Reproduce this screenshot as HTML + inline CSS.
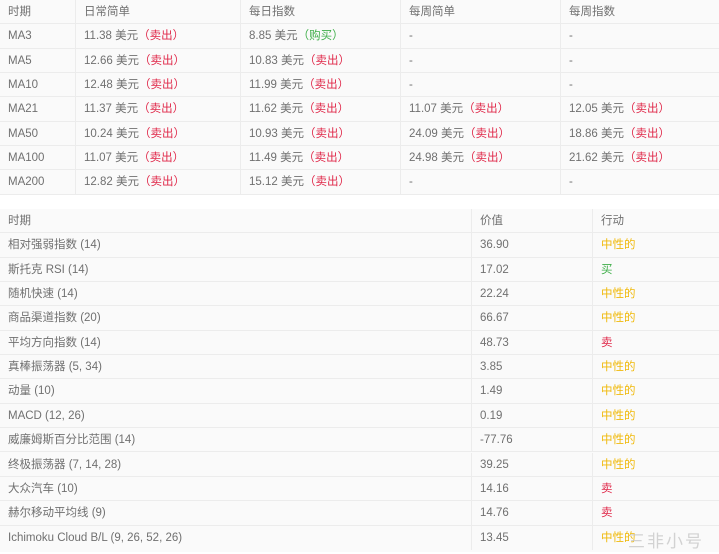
<!DOCTYPE html>
<html><head><meta charset="utf-8"><style>
*{margin:0;padding:0;box-sizing:border-box}
body{width:719px;height:554px;background:#fff;font-family:"Liberation Sans","Noto Sans CJK SC",sans-serif;font-size:11.5px;color:#707070;position:relative;overflow:hidden}
.t{position:absolute;left:0;width:719px;background:#fafafa}
.r{position:absolute;left:0;width:719px;height:24.35px;border-bottom:1px solid #ececec}
.c{position:absolute;top:0;height:100%;line-height:25px;padding-left:8px;border-left:1px solid #ececec;white-space:nowrap}
.c:first-child{border-left:none}
.s{color:#e0294a}.b{color:#3fae49}.n{color:#f0b90b}
</style></head><body>
<div class="t" style="top:0;height:194px">
<div class="r" style="top:0"><div class="c" style="left:0;width:75px">时期</div><div class="c" style="left:75px;width:165px">日常简单</div><div class="c" style="left:240px;width:160px">每日指数</div><div class="c" style="left:400px;width:160px">每周简单</div><div class="c" style="left:560px;width:159px">每周指数</div></div>
<div class="r" style="top:24.35px"><div class="c" style="left:0;width:75px">MA3</div><div class="c" style="left:75px;width:165px">11.38 美元<span class="s">（卖出）</span></div><div class="c" style="left:240px;width:160px">8.85 美元<span class="b">（购买）</span></div><div class="c" style="left:400px;width:160px">-</div><div class="c" style="left:560px;width:159px">-</div></div>
<div class="r" style="top:48.7px"><div class="c" style="left:0;width:75px">MA5</div><div class="c" style="left:75px;width:165px">12.66 美元<span class="s">（卖出）</span></div><div class="c" style="left:240px;width:160px">10.83 美元<span class="s">（卖出）</span></div><div class="c" style="left:400px;width:160px">-</div><div class="c" style="left:560px;width:159px">-</div></div>
<div class="r" style="top:73.05px"><div class="c" style="left:0;width:75px">MA10</div><div class="c" style="left:75px;width:165px">12.48 美元<span class="s">（卖出）</span></div><div class="c" style="left:240px;width:160px">11.99 美元<span class="s">（卖出）</span></div><div class="c" style="left:400px;width:160px">-</div><div class="c" style="left:560px;width:159px">-</div></div>
<div class="r" style="top:97.4px"><div class="c" style="left:0;width:75px">MA21</div><div class="c" style="left:75px;width:165px">11.37 美元<span class="s">（卖出）</span></div><div class="c" style="left:240px;width:160px">11.62 美元<span class="s">（卖出）</span></div><div class="c" style="left:400px;width:160px">11.07 美元<span class="s">（卖出）</span></div><div class="c" style="left:560px;width:159px">12.05 美元<span class="s">（卖出）</span></div></div>
<div class="r" style="top:121.75px"><div class="c" style="left:0;width:75px">MA50</div><div class="c" style="left:75px;width:165px">10.24 美元<span class="s">（卖出）</span></div><div class="c" style="left:240px;width:160px">10.93 美元<span class="s">（卖出）</span></div><div class="c" style="left:400px;width:160px">24.09 美元<span class="s">（卖出）</span></div><div class="c" style="left:560px;width:159px">18.86 美元<span class="s">（卖出）</span></div></div>
<div class="r" style="top:146.1px"><div class="c" style="left:0;width:75px">MA100</div><div class="c" style="left:75px;width:165px">11.07 美元<span class="s">（卖出）</span></div><div class="c" style="left:240px;width:160px">11.49 美元<span class="s">（卖出）</span></div><div class="c" style="left:400px;width:160px">24.98 美元<span class="s">（卖出）</span></div><div class="c" style="left:560px;width:159px">21.62 美元<span class="s">（卖出）</span></div></div>
<div class="r" style="top:170.45px"><div class="c" style="left:0;width:75px">MA200</div><div class="c" style="left:75px;width:165px">12.82 美元<span class="s">（卖出）</span></div><div class="c" style="left:240px;width:160px">15.12 美元<span class="s">（卖出）</span></div><div class="c" style="left:400px;width:160px">-</div><div class="c" style="left:560px;width:159px">-</div></div>
</div>
<div class="t" style="top:209px;height:343px">
<div class="r" style="top:0"><div class="c" style="left:0;width:471px">时期</div><div class="c" style="left:471px;width:121px">价值</div><div class="c" style="left:592px;width:127px">行动</div></div>
<div class="r" style="top:24.35px"><div class="c" style="left:0;width:471px">相对强弱指数 (14)</div><div class="c" style="left:471px;width:121px">36.90</div><div class="c n" style="left:592px;width:127px">中性的</div></div>
<div class="r" style="top:48.7px"><div class="c" style="left:0;width:471px">斯托克 RSI (14)</div><div class="c" style="left:471px;width:121px">17.02</div><div class="c b" style="left:592px;width:127px">买</div></div>
<div class="r" style="top:73.05px"><div class="c" style="left:0;width:471px">随机快速 (14)</div><div class="c" style="left:471px;width:121px">22.24</div><div class="c n" style="left:592px;width:127px">中性的</div></div>
<div class="r" style="top:97.4px"><div class="c" style="left:0;width:471px">商品渠道指数 (20)</div><div class="c" style="left:471px;width:121px">66.67</div><div class="c n" style="left:592px;width:127px">中性的</div></div>
<div class="r" style="top:121.75px"><div class="c" style="left:0;width:471px">平均方向指数 (14)</div><div class="c" style="left:471px;width:121px">48.73</div><div class="c s" style="left:592px;width:127px">卖</div></div>
<div class="r" style="top:146.1px"><div class="c" style="left:0;width:471px">真棒振荡器 (5, 34)</div><div class="c" style="left:471px;width:121px">3.85</div><div class="c n" style="left:592px;width:127px">中性的</div></div>
<div class="r" style="top:170.45px"><div class="c" style="left:0;width:471px">动量 (10)</div><div class="c" style="left:471px;width:121px">1.49</div><div class="c n" style="left:592px;width:127px">中性的</div></div>
<div class="r" style="top:194.8px"><div class="c" style="left:0;width:471px">MACD (12, 26)</div><div class="c" style="left:471px;width:121px">0.19</div><div class="c n" style="left:592px;width:127px">中性的</div></div>
<div class="r" style="top:219.15px"><div class="c" style="left:0;width:471px">威廉姆斯百分比范围 (14)</div><div class="c" style="left:471px;width:121px">-77.76</div><div class="c n" style="left:592px;width:127px">中性的</div></div>
<div class="r" style="top:243.5px"><div class="c" style="left:0;width:471px">终极振荡器 (7, 14, 28)</div><div class="c" style="left:471px;width:121px">39.25</div><div class="c n" style="left:592px;width:127px">中性的</div></div>
<div class="r" style="top:267.85px"><div class="c" style="left:0;width:471px">大众汽车 (10)</div><div class="c" style="left:471px;width:121px">14.16</div><div class="c s" style="left:592px;width:127px">卖</div></div>
<div class="r" style="top:292.2px"><div class="c" style="left:0;width:471px">赫尔移动平均线 (9)</div><div class="c" style="left:471px;width:121px">14.76</div><div class="c s" style="left:592px;width:127px">卖</div></div>
<div class="r" style="top:316.55px;border-bottom:none"><div class="c" style="left:0;width:471px">Ichimoku Cloud B/L (9, 26, 52, 26)</div><div class="c" style="left:471px;width:121px">13.45</div><div class="c n" style="left:592px;width:127px">中性的</div></div>
</div>
<div style="position:absolute;left:628px;top:527px;font-size:17px;color:rgba(200,200,200,.8);letter-spacing:2px">三非小号</div>
</body></html>
